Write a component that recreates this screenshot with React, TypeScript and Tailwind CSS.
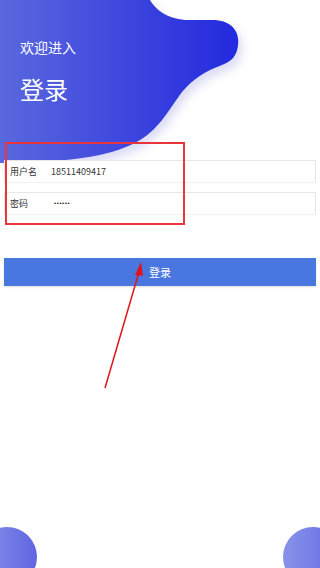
import React from "react";

const Row = ({ label, children }: { label: string; children: React.ReactNode }) => (
  <div className="flex h-[23px] items-center border border-[#e6e6e6] border-b-[#f0f0f0] bg-white pl-[5px] text-[9px] text-[#333]">
    <span className="w-[41px]">{label}</span>
    {children}
  </div>
);

export default function App() {
  return (
    <div className="relative h-[568px] w-[320px] overflow-hidden bg-white font-['Noto_Sans_CJK_SC','Noto_Sans',sans-serif]">
      {/* blob header */}
      <svg
        className="absolute left-0 top-0 drop-shadow-[4px_6px_5px_rgba(90,90,210,0.22)]"
        width="320"
        height="175"
        viewBox="0 0 320 175"
      >
        <defs>
          <linearGradient id="blob" x1="0" y1="0" x2="1" y2="0">
            <stop offset="0" stopColor="#5a68de" />
            <stop offset="1" stopColor="#2329de" />
          </linearGradient>
        </defs>
        <path
          d="M0,0 H150 C156,10 166,18 185,20 L210,20 C230,19 240,30 238,45 C237,57 230,62 222,65 C205,71 192,80 182,92 C170,108 160,128 140,140 C115,155 80,162 0,163 Z"
          fill="url(#blob)"
        />
      </svg>

      <div className="relative px-5 pt-[37px] text-white">
        <p className="text-[14px] leading-[20px]">欢迎进入</p>
        <h1 className="mt-[16px] text-[24px] leading-[32px]">登录</h1>
      </div>

      <div className="relative mt-[55px] flex flex-col gap-[9px] px-1">
        <Row label="用户名">
          <span>18511409417</span>
        </Row>
        <Row label="密码">
          <span className="pl-[3px] font-['Liberation_Sans',sans-serif] text-[6px] tracking-[0.6px] text-[#222]">••••••</span>
        </Row>
      </div>

      <button className="relative mx-1 mt-[43px] flex h-[28px] w-[312px] items-center justify-center bg-[#4a76e0] text-[11px] text-white shadow-[0_1px_2px_rgba(0,0,0,0.15)]">
        登录
      </button>

      {/* annotation */}
      <div className="absolute left-[5px] top-[142px] h-[83px] w-[180px] border-2 border-[#e8343a]" />
      <svg className="absolute left-0 top-0" width="320" height="400">
        <line x1="105" y1="388" x2="139" y2="272" stroke="#e0141c" strokeWidth="1.5" />
        <polygon points="141,262 135,275 143,276" fill="#e0141c" />
      </svg>

      {/* bottom circles */}
      <div className="absolute left-[-23px] top-[527px] h-[60px] w-[60px] rounded-full bg-gradient-to-r from-[#8894e9] to-[#6064e2]" />
      <div className="absolute left-[283px] top-[527px] h-[60px] w-[60px] rounded-full bg-gradient-to-r from-[#8894e9] to-[#6469e3]" />
    </div>
  );
}
